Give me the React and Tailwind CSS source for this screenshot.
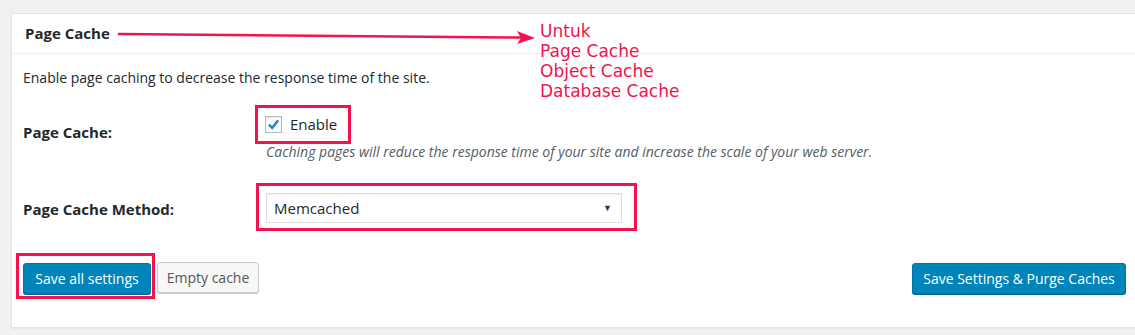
export default function App() {
  const font = { fontFamily: "'Open Sans', 'Noto Sans', sans-serif" };
  return (
    <div className="w-[1135px] h-[335px] overflow-hidden bg-[#f1f1f1] text-[#23282d] relative" style={font}>
      <div className="ml-[11px] mt-[13px] w-[1130px] bg-white border border-[#e5e5e5] shadow-[0_1px_1px_rgba(0,0,0,0.04)]">
        {/* header */}
        <div className="h-[40px] border-b border-[#eeeeee] flex items-center pl-[13px]">
          <h2 className="text-[15px] font-bold">Page Cache</h2>
        </div>

        <div className="px-[11px] pt-[13px] pb-[28px]">
          <p className="text-[14px]">Enable page caching to decrease the response time of the site.</p>

          {/* Page Cache row */}
          <div className="flex mt-[17px]">
            <div className="w-[243px] pt-[16px] text-[15px] font-bold">Page Cache:</div>
            <div className="flex flex-col">
              <div className="border-[3px] border-[#f2134e] w-[96px] h-[39px] flex items-center pl-[7px] -ml-[11px] gap-[8px]">
                <span className="w-[17px] h-[17px] border border-[#b4b9be] bg-white shadow-[inset_0_1px_2px_rgba(0,0,0,0.1)] flex items-center justify-center">
                  <svg width="15" height="15" viewBox="0 0 16 16">
                    <path d="M3 8.2 L6.6 11.6 L13 3.6" fill="none" stroke="#1e8cbe" strokeWidth="2.6" />
                  </svg>
                </span>
                <span className="text-[15px]">Enable</span>
              </div>
              <p className="text-[14px] italic text-[#555d66] mt-[-3px]">
                Caching pages will reduce the response time of your site and increase the scale of your web server.
              </p>
            </div>
          </div>

          {/* Method row */}
          <div className="flex mt-[21px]">
            <div className="w-[244px] pt-[15px] text-[15px] font-bold">Page Cache Method:</div>
            <div className="border-[3px] border-[#f2134e] w-[381px] h-[48px] -ml-[11px] pl-[7px] pt-[7px]">
              <div className="w-[356px] h-[30px] border border-[#dddddd] bg-white shadow-[inset_0_1px_2px_rgba(0,0,0,0.07)] flex items-center justify-between pl-[7px] pr-[9px]">
                <span className="text-[15px]">Memcached</span>
                <span className="text-[9px] text-[#32373c]">▼</span>
              </div>
            </div>
          </div>

          {/* buttons */}
          <div className="flex items-end justify-between mt-[22px]">
            <div className="flex items-center">
              <div className="border-[3px] border-[#f2134e] w-[139px] h-[46px] -ml-[7px] pl-[4px] pt-[7px]">
                <button className="w-[128px] h-[31px] rounded-[3px] bg-[#0085ba] border border-[#0073aa] shadow-[0_1px_0_#006799] text-white text-[14px] whitespace-nowrap">
                  Save all settings
                </button>
              </div>
              <button className="ml-[2px] mt-[2px] w-[102px] h-[31px] rounded-[3px] bg-[#f7f7f7] border border-[#cccccc] shadow-[0_1px_0_#cccccc] text-[#555555] text-[14px] whitespace-nowrap">
                Empty cache
              </button>
            </div>
            <button className="mb-[5px] mr-[3px] w-[214px] h-[31px] rounded-[3px] bg-[#0085ba] border border-[#0073aa] shadow-[0_1px_0_#006799] text-white text-[14px] whitespace-nowrap">
              Save Settings &amp; Purge Caches
            </button>
          </div>
        </div>
      </div>

      {/* annotation arrow */}
      <svg className="absolute left-0 top-0 pointer-events-none" width="1135" height="335">
        <line x1="119" y1="34" x2="522" y2="37.5" stroke="#f2134e" strokeWidth="2.5" strokeLinecap="round" />
        <polygon points="535,38 517,31 521,38 517,44" fill="#f2134e" />
      </svg>
      <div className="absolute left-[540px] top-[21px] text-[17px] leading-[20px] text-[#f2134e]" style={{ fontFamily: "'DejaVu Sans', sans-serif" }}>
        <div>Untuk</div>
        <div>Page Cache</div>
        <div>Object Cache</div>
        <div>Database Cache</div>
      </div>
    </div>
  );
}
